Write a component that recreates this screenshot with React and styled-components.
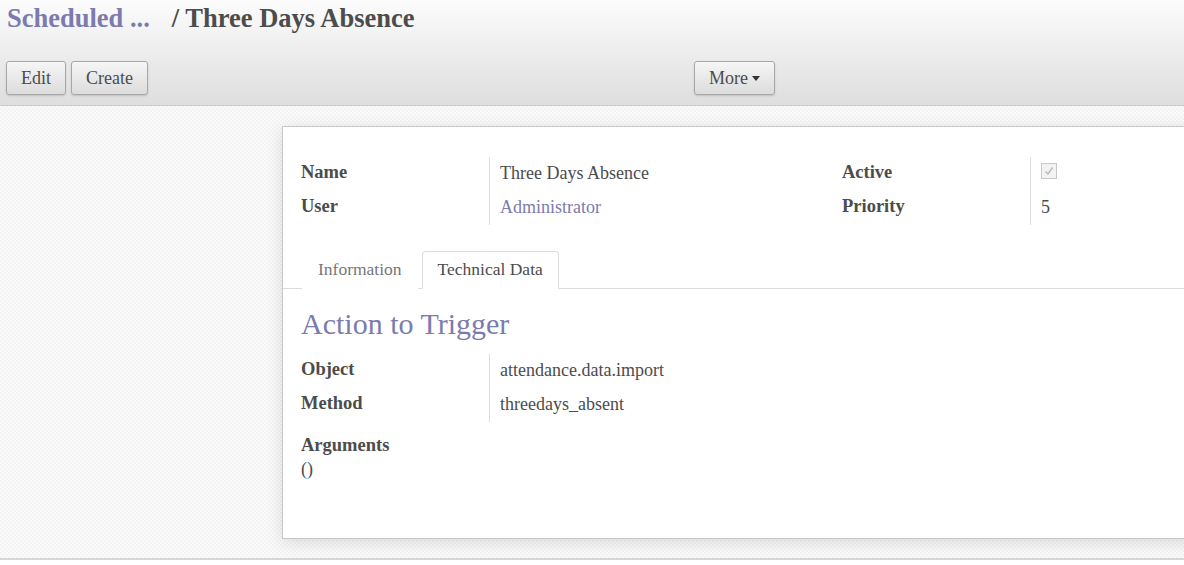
import React from 'react';
import styled, { createGlobalStyle } from 'styled-components';

const GlobalStyle = createGlobalStyle`
    html, body { margin: 0; padding: 0; background: #fff; }
    body {
        font-family: "Liberation Serif", "Times New Roman", serif;
        color: #4c4c4c;
        overflow: hidden;
    }
`;

const purple = '#7c7bad';

function Field({label, children, link}){
    return (
        <Row>
            <Label>{label}</Label>
            <Value $link={link}>{children}</Value>
        </Row>
    )
}

function App(){
    return (
        <>
            <GlobalStyle />
            <Header>
                <Breadcrumb>
                    <Crumb>Scheduled ...</Crumb>
                    <Current>/ Three Days Absence</Current>
                </Breadcrumb>
                <Toolbar>
                    <ButtonGroup>
                        <Button>Edit</Button>
                        <Button>Create</Button>
                    </ButtonGroup>
                    <MoreSlot>
                        <Button>More<Caret /></Button>
                    </MoreSlot>
                </Toolbar>
            </Header>
            <Body>
                <Sheet>
                    <Groups>
                        <Group>
                            <Field label="Name">Three Days Absence</Field>
                            <Field label="User" link>Administrator</Field>
                        </Group>
                        <Group>
                            <Field label="Active">
                                <Checkbox>
                                    <svg width="12" height="12" viewBox="0 0 12 12">
                                        <path d="M2.5 6.5 L5 9 L9.5 2.5" fill="none" stroke="#b9b9b9" strokeWidth="1.4" />
                                    </svg>
                                </Checkbox>
                            </Field>
                            <Field label="Priority">5</Field>
                        </Group>
                    </Groups>
                    <Tabs>
                        <Tab>Information</Tab>
                        <Tab $active>Technical Data</Tab>
                    </Tabs>
                    <Pane>
                        <Heading>Action to Trigger</Heading>
                        <Group>
                            <Field label="Object">attendance.data.import</Field>
                            <Field label="Method">threedays_absent</Field>
                        </Group>
                        <Block>
                            <Label>Arguments</Label>
                            <Plain>()</Plain>
                        </Block>
                    </Pane>
                </Sheet>
            </Body>
        </>
    )
}

const Header = styled.div`
    height: 106px;
    box-sizing: border-box;
    padding: 4px 6px 0;
    background: linear-gradient(#fcfcfc, #dedede);
    border-bottom: 1px solid #cacaca;
`;

const Breadcrumb = styled.div`
    display: flex;
    gap: 22px;
    font-size: 26.5px;
    font-weight: bold;
    line-height: 28px;
    padding-left: 1px;
`;

const Crumb = styled.span`
    color: ${purple};
`;

const Current = styled.span`
    color: #4c4c4c;
`;

const Toolbar = styled.div`
    display: flex;
    margin-top: 29px;
`;

const ButtonGroup = styled.div`
    display: flex;
    gap: 5px;
    width: 688px;
`;

const MoreSlot = styled.div`
    display: flex;
`;

const Button = styled.button`
    height: 34px;
    padding: 0 14px;
    font-family: inherit;
    font-size: 18px;
    color: #4c4c4c;
    background: linear-gradient(#f6f6f6, #dcdcdc);
    border: 1px solid #a8a8a8;
    border-radius: 3px;
    box-shadow: 0 1px 2px rgba(0,0,0,0.15);
    display: flex;
    align-items: center;
    gap: 4px;
`;

const Caret = styled.span`
    width: 0;
    height: 0;
    border-left: 4px solid transparent;
    border-right: 4px solid transparent;
    border-top: 5px solid #333;
    margin-top: 1px;
`;

const Body = styled.div`
    height: 454px;
    box-sizing: border-box;
    padding: 20px 0 0 282px;
    border-bottom: 2px solid #d6d6d6;
    background-color: #f7f7f7;
    background-image: repeating-conic-gradient(#f3f3f3 0 25%, #fbfbfb 0 50%);
    background-size: 4px 4px;
    overflow: hidden;
`;

const Sheet = styled.div`
    width: 1100px;
    height: 413px;
    box-sizing: border-box;
    background: #fff;
    border: 1px solid #c8c8c8;
    box-shadow: 0 4px 16px rgba(0,0,0,0.12);
    padding-top: 30px;
`;

const Groups = styled.div`
    display: flex;
    padding-left: 18px;
`;

const Group = styled.div`
    width: 541px;
    flex-shrink: 0;
    display: flex;
    flex-direction: column;
`;

const Row = styled.div`
    display: flex;
    height: 34px;
`;

const Label = styled.div`
    width: 188px;
    box-sizing: border-box;
    font-size: 18.5px;
    font-weight: bold;
    color: #4c4c4c;
    padding-top: 5px;
`;

const Value = styled.div`
    border-left: 1px solid #ddd;
    padding: 6px 0 0 10px;
    font-size: 18px;
    color: ${p => p.$link ? purple : '#4c4c4c'};
`;

const Checkbox = styled.span`
    display: flex;
    align-items: center;
    justify-content: center;
    width: 14px;
    height: 14px;
    margin-top: 0px;
    border: 1px solid #c8c8c8;
    background: #f2f2f2;
`;

const Tabs = styled.div`
    display: flex;
    margin-top: 26px;
    padding-left: 19px;
    border-bottom: 1px solid #ddd;
`;

const Tab = styled.div`
    height: 38px;
    box-sizing: border-box;
    padding: 7px 15px 0;
    font-size: 17.5px;
    margin-bottom: -1px;
    margin-right: 4px;
    border: 1px solid ${p => p.$active ? '#ddd' : 'transparent'};
    border-bottom-color: ${p => p.$active ? '#fff' : 'transparent'};
    border-radius: 4px 4px 0 0;
    background: #fff;
    color: ${p => p.$active ? '#4c4c4c' : '#777'};
`;

const Pane = styled.div`
    padding: 19px 18px 0;
`;

const Heading = styled.h2`
    margin: 0 0 14px;
    font-size: 30px;
    font-weight: normal;
    color: ${purple};
    line-height: 32px;
`;

const Block = styled.div`
    margin-top: 8px;
    display: flex;
    flex-direction: column;
    gap: 3px;
`;

const Plain = styled.div`
    font-size: 18px;
`;

export default App;
